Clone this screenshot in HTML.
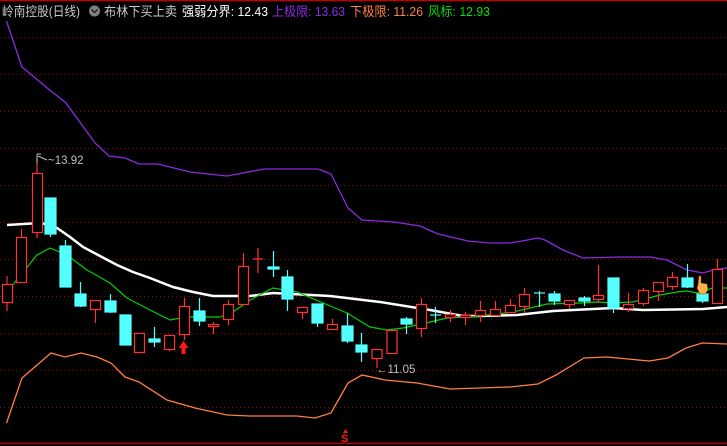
<!DOCTYPE html>
<html><head><meta charset="utf-8"><style>
html,body{margin:0;padding:0;background:#000;width:727px;height:446px;overflow:hidden}
svg{display:block}
.t{font-family:"Liberation Sans","Noto Sans CJK SC",sans-serif;font-size:13px}
</style></head><body>
<svg width="727" height="446" viewBox="0 0 727 446" xmlns="http://www.w3.org/2000/svg">
<rect width="727" height="446" fill="#000"/>
<line x1="0" y1="0.5" x2="727" y2="0.5" stroke="#c00000" stroke-width="1.5"/>
<g stroke="#a00000" stroke-width="1" stroke-dasharray="1,3">
<line x1="0" y1="37.5" x2="727" y2="37.5"/><line x1="0" y1="74.5" x2="727" y2="74.5"/>
<line x1="0" y1="111.5" x2="727" y2="111.5"/><line x1="0" y1="148.5" x2="727" y2="148.5"/>
<line x1="0" y1="185.5" x2="727" y2="185.5"/><line x1="0" y1="222.5" x2="727" y2="222.5"/>
<line x1="0" y1="259.5" x2="727" y2="259.5"/><line x1="0" y1="296.5" x2="727" y2="296.5"/>
<line x1="0" y1="333.5" x2="727" y2="333.5"/><line x1="0" y1="370.5" x2="727" y2="370.5"/>
<line x1="0" y1="407.5" x2="727" y2="407.5"/>
</g>
<line x1="0" y1="443.5" x2="727" y2="443.5" stroke="#b00000" stroke-width="1.5"/>
<!-- header -->
<text class="t" x="2" y="16" fill="#c8c8c8" textLength="78" lengthAdjust="spacingAndGlyphs">岭南控股(日线)</text>
<circle cx="94.5" cy="11" r="5.5" fill="#808080"/>
<path d="M91.5 9.5 L94.5 12.5 L97.5 9.5" stroke="#222" stroke-width="1.5" fill="none"/>
<text class="t" x="104" y="16" fill="#c8c8c8" textLength="73" lengthAdjust="spacingAndGlyphs">布林下买上卖</text>
<text class="t" x="182" y="16" fill="#ffffff" textLength="86" lengthAdjust="spacingAndGlyphs">强弱分界: 12.43</text>
<text class="t" x="272" y="16" fill="#8a2be2" textLength="73" lengthAdjust="spacingAndGlyphs">上极限: 13.63</text>
<text class="t" x="350" y="16" fill="#ff8040" textLength="73" lengthAdjust="spacingAndGlyphs">下极限: 11.26</text>
<text class="t" x="428" y="16" fill="#00e000" textLength="62" lengthAdjust="spacingAndGlyphs">风标: 12.93</text>
<!-- purple upper -->
<polyline fill="none" stroke="#8a2be2" stroke-width="1.3" points="6.5,21 21.8,66.7 46,87 66,103 95,143 109,156 125,158 139,164 158,164 190,172 227,176 264,169 318,169 331,174 348,208 362,220 394,222 420,226 438,234 468,241 489,243 510,243 522,241 538,238 545,240 563,250 583,258 620,257 650,257 667,260 687,270 703,273 713,270 727,268"/>
<!-- orange lower -->
<polyline fill="none" stroke="#ff8040" stroke-width="1.3" points="6.5,423 22,378 51,353 65,357 81,353 97,357 111,363 125,377 139,382 167,400 195,408 227,415 250,416 297,416 315,418 331,413 348,383 362,375 385,380 417,383 450,389 510,387 538,384 556,375 584,358 607,357 649,361 668,358 686,348 702,343 727,344"/>
<!-- white MA -->
<polyline fill="none" stroke="#ffffff" stroke-width="2.5" points="7,225 40,223 50,225 57,228 70,237 83,247 100,256 117,265 133,272 150,278 173,287 193,292 213,296 250,296 273,293 330,296 380,302 430,310 463,316 480,316 517,315 553,311 613,308 643,310 703,309 727,307"/>
<!-- green -->
<polyline fill="none" stroke="#00d000" stroke-width="1.2" points="7,292 37,255 50,248 67,255 87,270 110,283 127,298 150,310 170,320 187,317 220,317 233,312 250,300 273,288 297,292 323,303 347,313 370,327 387,330 403,328 430,322 447,318 480,316 513,312 547,304 580,303 597,302 613,303 633,302 660,295 677,292 687,291 697,293 713,288 727,288"/>
<!-- candles -->
<g stroke="#ff3232" stroke-width="1.2" fill="none">
<line x1="7" y1="276" x2="7" y2="311"/><rect x="2.5" y="284.5" width="10" height="18" fill="#000"/>
<line x1="21.5" y1="229" x2="21.5" y2="283"/><rect x="16.5" y="237.5" width="10" height="45" fill="#000"/>
<line x1="37" y1="157" x2="37" y2="238"/><rect x="32.5" y="173.5" width="10" height="59" fill="#000"/>
<line x1="95.5" y1="306" x2="95.5" y2="323"/><rect x="90.5" y="300.5" width="10" height="9" fill="#000"/>
<rect x="134.5" y="333.5" width="10" height="19" fill="#000"/>
<line x1="169.5" y1="335" x2="169.5" y2="351"/><rect x="164.5" y="335.5" width="10" height="14" fill="#000"/>
<line x1="184.5" y1="298" x2="184.5" y2="340"/><rect x="179.5" y="306.5" width="10" height="28" fill="#000"/>
<line x1="213.5" y1="322" x2="213.5" y2="334"/><rect x="208.5" y="324.5" width="10" height="2" fill="#000"/>
<line x1="228.5" y1="300" x2="228.5" y2="325"/><rect x="223.5" y="304.5" width="10" height="15" fill="#000"/>
<line x1="243.5" y1="253" x2="243.5" y2="305"/><rect x="238.5" y="266.5" width="10" height="38" fill="#000"/>
<line x1="258" y1="248" x2="258" y2="273"/><line x1="253" y1="259" x2="263" y2="259"/>
<line x1="302.5" y1="307" x2="302.5" y2="319"/><rect x="297.5" y="307.5" width="10" height="5" fill="#000"/>
<line x1="332.5" y1="319" x2="332.5" y2="329"/><rect x="327.5" y="324.5" width="10" height="5" fill="#000"/>
<line x1="377" y1="349" x2="377" y2="368"/><rect x="372" y="349.5" width="10" height="9" fill="#000"/>
<rect x="387" y="330.5" width="10" height="23" fill="#000"/>
<line x1="421.5" y1="298" x2="421.5" y2="337"/><rect x="416.5" y="304.5" width="10" height="24" fill="#000"/>
<line x1="450.5" y1="310" x2="450.5" y2="322"/><rect x="445.5" y="314.5" width="10" height="3" fill="#000"/>
<line x1="465.5" y1="312" x2="465.5" y2="325"/><rect x="460.5" y="315.5" width="10" height="2" fill="#000"/>
<line x1="480.5" y1="301" x2="480.5" y2="322"/><rect x="475.5" y="310.5" width="10" height="5" fill="#000"/>
<line x1="495.5" y1="301" x2="495.5" y2="316"/><rect x="490.5" y="309.5" width="10" height="6" fill="#000"/>
<line x1="510.5" y1="299" x2="510.5" y2="313"/><rect x="505.5" y="305.5" width="10" height="7" fill="#000"/>
<line x1="524.5" y1="288" x2="524.5" y2="313"/><rect x="519.5" y="294.5" width="10" height="12" fill="#000"/>
<line x1="569.5" y1="300" x2="569.5" y2="309"/><rect x="564.5" y="300.5" width="10" height="4" fill="#000"/>
<line x1="598.5" y1="265" x2="598.5" y2="303"/><rect x="593.5" y="295.5" width="10" height="4" fill="#000"/>
<line x1="628.5" y1="293" x2="628.5" y2="312"/><rect x="623.5" y="304.5" width="10" height="4" fill="#000"/>
<line x1="643.5" y1="288" x2="643.5" y2="306"/><rect x="638.5" y="290.5" width="10" height="13" fill="#000"/>
<line x1="658.5" y1="282" x2="658.5" y2="301"/><rect x="653.5" y="282.5" width="10" height="9" fill="#000"/>
<line x1="672.5" y1="272" x2="672.5" y2="290"/><rect x="667.5" y="277.5" width="10" height="9" fill="#000"/>
<line x1="717.5" y1="259" x2="717.5" y2="270"/><rect x="712.5" y="269.5" width="10" height="34" fill="#000"/>
</g>
<g stroke="#54ffff" stroke-width="1.2" fill="#54ffff">
<line x1="50.5" y1="198" x2="50.5" y2="237"/><rect x="45" y="198" width="11" height="36"/>
<line x1="65.5" y1="240" x2="65.5" y2="287"/><rect x="60" y="246" width="11" height="41"/>
<line x1="80.5" y1="282" x2="80.5" y2="307"/><rect x="75" y="294" width="11" height="12"/>
<line x1="110.5" y1="294" x2="110.5" y2="313"/><rect x="105" y="301" width="11" height="11"/>
<rect x="120" y="315" width="11" height="30"/>
<line x1="154.5" y1="327" x2="154.5" y2="347"/><rect x="149" y="339" width="11" height="3"/>
<line x1="199.5" y1="298" x2="199.5" y2="326"/><rect x="194" y="311" width="11" height="10"/>
<line x1="273.5" y1="251" x2="273.5" y2="277"/><rect x="268" y="267" width="11" height="2"/>
<line x1="287.5" y1="270" x2="287.5" y2="311"/><rect x="282" y="277" width="11" height="22"/>
<line x1="317.5" y1="304" x2="317.5" y2="327"/><rect x="312" y="304" width="11" height="19"/>
<line x1="347.5" y1="313" x2="347.5" y2="343"/><rect x="342" y="326" width="11" height="15"/>
<line x1="361.5" y1="333" x2="361.5" y2="362"/><rect x="356" y="345" width="11" height="7"/>
<line x1="406.5" y1="317" x2="406.5" y2="334"/><rect x="401" y="319" width="11" height="5"/>
<line x1="435.5" y1="307" x2="435.5" y2="323"/><line x1="430" y1="315" x2="441" y2="315"/>
<line x1="539.5" y1="291" x2="539.5" y2="307"/><line x1="534" y1="293" x2="545" y2="293"/>
<line x1="554.5" y1="291" x2="554.5" y2="305"/><rect x="549" y="294" width="11" height="7"/>
<line x1="584.5" y1="296" x2="584.5" y2="306"/><rect x="579" y="298" width="11" height="3"/>
<line x1="613.5" y1="278" x2="613.5" y2="313"/><rect x="608" y="278" width="11" height="30"/>
<line x1="687.5" y1="264" x2="687.5" y2="288"/><rect x="682" y="278" width="11" height="9"/>
<line x1="702.5" y1="290" x2="702.5" y2="303"/><rect x="697" y="294" width="11" height="7"/>
</g>
<!-- red arrow -->
<path d="M183.5 341 L188.5 348 L185.5 348 L185.5 354 L181.5 354 L181.5 348 L178.5 348 Z" fill="#ff1a1a"/>
<!-- hand cursor -->
<path d="M699 276 L701 276 L701 283 L707 284 L708 290 L705 294 L700 294 L697 288 L698 285 Z" fill="#ffb347" stroke="#8b4513" stroke-width="0.6"/>
<!-- labels -->
<path d="M37 163 L37 154 M37 154 L41 154 M38 156 L47 160" stroke="#c0c0c0" stroke-width="1" fill="none"/>
<text x="48" y="164" font-family="Liberation Sans,sans-serif" font-size="11.5" fill="#c0c0c0">~13.92</text>
<text x="376" y="373" font-family="Liberation Sans,sans-serif" font-size="11.5" fill="#c0c0c0">←11.05</text>
<path d="M345.5 429 L348 433 L343 433 Z" fill="#ff1a1a"/>
<text x="341" y="442" font-family="Liberation Sans,sans-serif" font-size="11" font-weight="bold" fill="#ff1a1a">S</text>
</svg>
</body></html>
